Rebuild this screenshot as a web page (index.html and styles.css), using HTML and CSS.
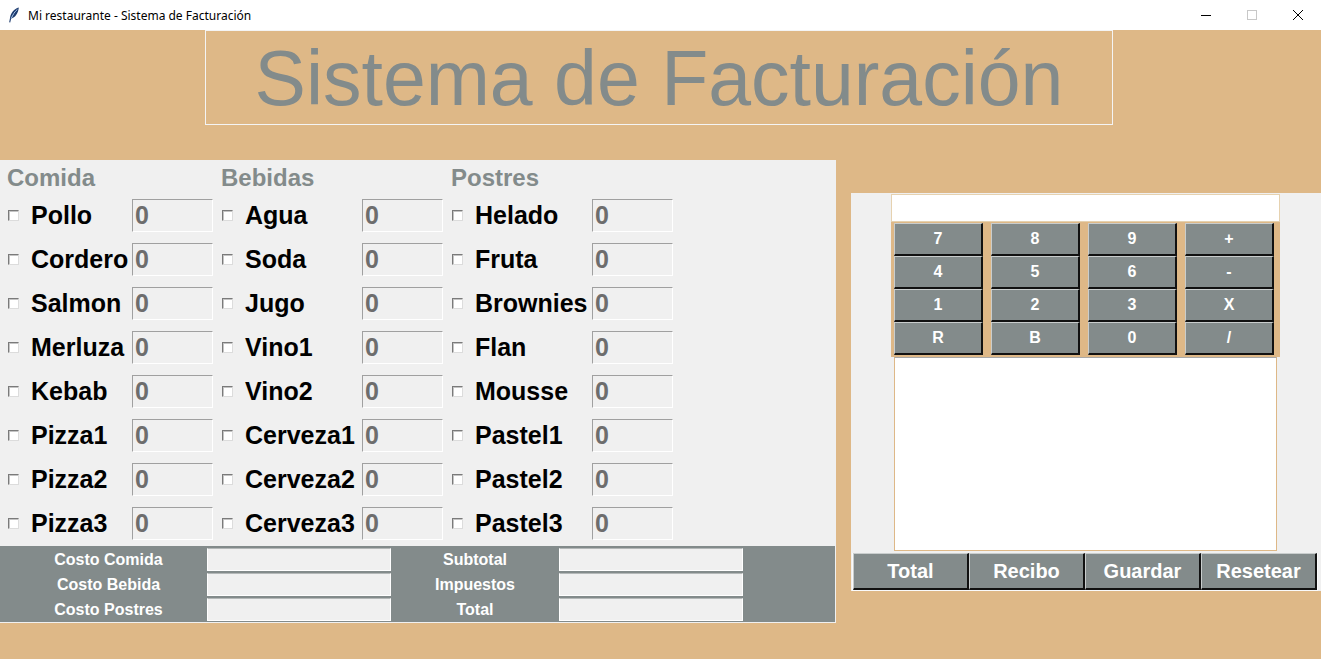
FILE: index.html
```html
<!DOCTYPE html>
<html lang="es">
<head>
<meta charset="utf-8">
<title>Mi restaurante - Sistema de Facturación</title>
<link rel="stylesheet" href="styles.css">
</head>
<body>
<div class="titlebar">
  <svg class="app-icon" width="12" height="16" viewBox="0 0 12 16">
    <path d="M10.8 0.6 C6.2 1.8 2.8 6 2 11 L1.2 15.2 L2.2 15.4 L3.1 11.8 C7.2 10.6 10.3 6.4 10.8 0.6 Z" fill="#1d3b6e"/>
    <path d="M9.4 2.4 C6.8 4.5 4.6 8 3.2 11.6" stroke="#a9c6ec" stroke-width="1" fill="none"/>
  </svg>
  <span class="win-title">Mi restaurante - Sistema de Facturación</span>
  <div class="win-controls">
    <span class="ctl"><svg width="12" height="12" viewBox="0 0 12 12"><path d="M1 6.5 H11" stroke="#000" stroke-width="1"/></svg></span>
    <span class="ctl"><svg width="12" height="12" viewBox="0 0 12 12"><rect x="1.5" y="1.5" width="9" height="9" fill="none" stroke="#c8c8c8" stroke-width="1"/></svg></span>
    <span class="ctl"><svg width="12" height="12" viewBox="0 0 12 12"><path d="M1 1 L11 11 M11 1 L1 11" stroke="#000" stroke-width="1"/></svg></span>
  </div>
</div>

<div class="window">
  <div class="header">
    <h1 class="app-name">Sistema de Facturación</h1>
  </div>

  <div class="main">
    <div class="menu-panel">
      <div class="menu-top">
        <div class="cat cat-first">
          <div class="cat-title">Comida</div>
          <div class="item"><div class="item-label"><span class="check"></span>Pollo</div><div class="qty">0</div></div>
          <div class="item"><div class="item-label"><span class="check"></span>Cordero</div><div class="qty">0</div></div>
          <div class="item"><div class="item-label"><span class="check"></span>Salmon</div><div class="qty">0</div></div>
          <div class="item"><div class="item-label"><span class="check"></span>Merluza</div><div class="qty">0</div></div>
          <div class="item"><div class="item-label"><span class="check"></span>Kebab</div><div class="qty">0</div></div>
          <div class="item"><div class="item-label"><span class="check"></span>Pizza1</div><div class="qty">0</div></div>
          <div class="item"><div class="item-label"><span class="check"></span>Pizza2</div><div class="qty">0</div></div>
          <div class="item"><div class="item-label"><span class="check"></span>Pizza3</div><div class="qty">0</div></div>
        </div>
        <div class="cat">
          <div class="cat-title">Bebidas</div>
          <div class="item"><div class="item-label"><span class="check"></span>Agua</div><div class="qty">0</div></div>
          <div class="item"><div class="item-label"><span class="check"></span>Soda</div><div class="qty">0</div></div>
          <div class="item"><div class="item-label"><span class="check"></span>Jugo</div><div class="qty">0</div></div>
          <div class="item"><div class="item-label"><span class="check"></span>Vino1</div><div class="qty">0</div></div>
          <div class="item"><div class="item-label"><span class="check"></span>Vino2</div><div class="qty">0</div></div>
          <div class="item"><div class="item-label"><span class="check"></span>Cerveza1</div><div class="qty">0</div></div>
          <div class="item"><div class="item-label"><span class="check"></span>Cerveza2</div><div class="qty">0</div></div>
          <div class="item"><div class="item-label"><span class="check"></span>Cerveza3</div><div class="qty">0</div></div>
        </div>
        <div class="cat">
          <div class="cat-title">Postres</div>
          <div class="item"><div class="item-label"><span class="check"></span>Helado</div><div class="qty">0</div></div>
          <div class="item"><div class="item-label"><span class="check"></span>Fruta</div><div class="qty">0</div></div>
          <div class="item"><div class="item-label"><span class="check"></span>Brownies</div><div class="qty">0</div></div>
          <div class="item"><div class="item-label"><span class="check"></span>Flan</div><div class="qty">0</div></div>
          <div class="item"><div class="item-label"><span class="check"></span>Mousse</div><div class="qty">0</div></div>
          <div class="item"><div class="item-label"><span class="check"></span>Pastel1</div><div class="qty">0</div></div>
          <div class="item"><div class="item-label"><span class="check"></span>Pastel2</div><div class="qty">0</div></div>
          <div class="item"><div class="item-label"><span class="check"></span>Pastel3</div><div class="qty">0</div></div>
        </div>
      </div>
      <div class="costs">
        <div class="cost-label cl-first">Costo Comida</div><div class="cost-field"></div>
        <div class="cost-label">Subtotal</div><div class="cost-field"></div>
        <div class="cost-label cl-first">Costo Bebida</div><div class="cost-field"></div>
        <div class="cost-label">Impuestos</div><div class="cost-field"></div>
        <div class="cost-label cl-first">Costo Postres</div><div class="cost-field"></div>
        <div class="cost-label">Total</div><div class="cost-field"></div>
      </div>
    </div>

    <div class="calc-panel">
      <div class="calc-display"></div>
      <div class="calc-keys">
        <div class="key">7</div><div class="key">8</div><div class="key">9</div><div class="key">+</div>
        <div class="key">4</div><div class="key">5</div><div class="key">6</div><div class="key">-</div>
        <div class="key">1</div><div class="key">2</div><div class="key">3</div><div class="key">X</div>
        <div class="key">R</div><div class="key">B</div><div class="key">0</div><div class="key">/</div>
      </div>
      <div class="receipt"></div>
      <div class="actions">
        <div class="action">Total</div>
        <div class="action">Recibo</div>
        <div class="action">Guardar</div>
        <div class="action">Resetear</div>
      </div>
    </div>
  </div>
</div>
</body>
</html>
```

FILE: styles.css
```css
* { box-sizing: border-box; }

html, body {
  margin: 0;
  padding: 0;
  width: 1321px;
  height: 659px;
  overflow: hidden;
  font-family: "Liberation Sans", Arial, sans-serif;
  background: #deb887;
}

/* ---------- title bar ---------- */
.titlebar {
  height: 30px;
  background: #ffffff;
  display: flex;
  align-items: center;
  padding-left: 8px;
}
.app-icon { margin-right: 8px; }
.win-title {
  font-family: "Noto Sans", "Open Sans", sans-serif;
  font-size: 12px;
  color: #000;
}
.win-controls {
  margin-left: auto;
  display: flex;
  height: 30px;
}
.ctl {
  width: 46px;
  height: 30px;
  display: flex;
  align-items: center;
  justify-content: center;
}

/* ---------- window ---------- */
.window {
  height: 629px;
  background: #deb887;
}

.header {
  margin-left: 205px;
  width: 908px;
  height: 95px;
  border: 1px solid #f4f4f4;
  display: flex;
  align-items: center;
  justify-content: center;
}
.app-name {
  margin: 0;
  font-weight: normal;
  font-size: 77px;
  line-height: 86px;
  color: #838b8b;
  white-space: nowrap;
}

.main {
  display: flex;
  align-items: flex-start;
  margin-top: 35px;
}

/* ---------- menu panel ---------- */
.menu-panel {
  width: 836px;
  height: 463px;
  background: #f0f0f0;
  display: flex;
  flex-direction: column;
}
.menu-top {
  display: flex;
  height: 386px;
}
.cat {
  width: 225px;
  margin-left: 5px;
}
.cat-first {
  width: 209px;
  margin-left: 4px;
}
.cat-title {
  height: 33px;
  line-height: 35px;
  padding-left: 3px;
  font-size: 24px;
  font-weight: bold;
  color: #838b8b;
}
.item {
  height: 44px;
  display: flex;
  align-items: center;
}
.item-label {
  width: 144px;
  display: flex;
  align-items: center;
  font-size: 25px;
  font-weight: bold;
  color: #000;
  white-space: nowrap;
}
.cat-first .item-label { width: 128px; }
.check {
  width: 11px;
  height: 11px;
  margin-left: 4px;
  margin-right: 12px;
  background: #fff;
  border: 1px solid;
  border-color: #7a7a7a #dcdcdc #dcdcdc #7a7a7a;
  box-shadow: inset 1px 1px 0 #c4c4c4;
  flex: none;
}
.qty {
  width: 81px;
  height: 33px;
  background: #f0f0f0;
  border: 1px solid;
  border-color: #a0a0a0 #ffffff #ffffff #a0a0a0;
  font-size: 25px;
  font-weight: bold;
  color: #6d6d6d;
  line-height: 31px;
  padding-left: 2px;
}

/* ---------- cost panel ---------- */
.costs {
  height: 77px;
  background: #838b8b;
  border-right: 1px solid #f0f0f0;
  border-bottom: 1px solid #f0f0f0;
  display: grid;
  grid-template-columns: 207px 184px 168px 184px;
  grid-template-rows: 23px 23px 23px;
  row-gap: 2px;
  padding-top: 2px;
  align-content: start;
}
.cost-label {
  font-size: 16px;
  font-weight: bold;
  color: #fff;
  text-align: center;
  line-height: 23px;
}
.cl-first { padding-left: 10px; }
.cost-field {
  background: #f0f0f0;
  border: 1px solid;
  border-color: #b4b8b8 #ffffff #ffffff #ffffff;
}

/* ---------- calculator panel ---------- */
.calc-panel {
  margin-left: 15px;
  margin-top: 33px;
  width: 470px;
  height: 398px;
  background: #f0f0f0;
  display: flex;
  flex-direction: column;
  align-items: flex-start;
  padding-top: 1px;
}
.calc-display {
  width: 389px;
  height: 28px;
  background: #fff;
  border: 1px solid #e6d2b0;
  margin-left: 40px;
}
.calc-keys {
  width: 389px;
  margin-left: 40px;
  background: #deb887;
  display: grid;
  grid-template-columns: repeat(4, 89px);
  grid-auto-rows: 33px;
  column-gap: 8px;
  padding: 1px 6px 2px 3px;
}
.key {
  background: #838b8b;
  color: #fff;
  font-size: 16px;
  font-weight: bold;
  display: flex;
  align-items: center;
  justify-content: center;
  border-top: 1px solid #c9cdcd;
  border-left: 1px solid #c9cdcd;
  border-right: 2px solid #111;
  border-bottom: 2px solid #111;
}
.receipt {
  width: 383px;
  height: 194px;
  background: #fff;
  border: 1px solid #deb887;
  border-top-color: #a8a8a8;
  margin-left: 43px;
}
.actions {
  margin-top: 2px;
  margin-left: 1px;
  display: flex;
  border: 1px solid #fafafa;
  border-top: none;
}
.action {
  width: 116px;
  height: 37px;
  background: #838b8b;
  color: #fff;
  font-size: 20px;
  font-weight: bold;
  display: flex;
  align-items: center;
  justify-content: center;
  border-top: 1px solid #c9cdcd;
  border-left: 1px solid #c9cdcd;
  border-right: 2px solid #111;
  border-bottom: 2px solid #111;
}
```
